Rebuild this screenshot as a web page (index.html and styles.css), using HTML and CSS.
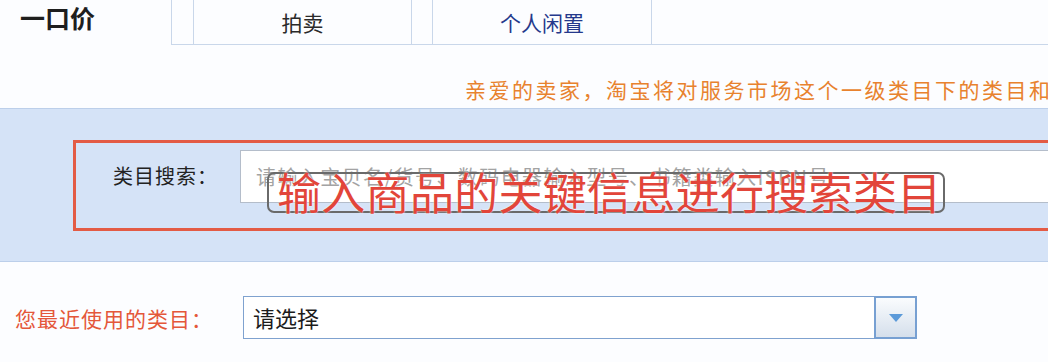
FILE: index.html
```
<!DOCTYPE html>
<html lang="zh-CN">
<head>
  <meta charset="UTF-8" />
  <title>发布宝贝 - 选择类目</title>
  <link rel="stylesheet" href="styles.css">
</head>
<body>
  <div class="publish-page">
    <div class="sell-tabs">
      <div class="sell-tab-current">一口价</div>
      <div class="sell-tab-list">
        <a class="sell-tab">拍卖</a>
        <a class="sell-tab sell-tab-blue">个人闲置</a>
      </div>
    </div>

    <p class="notice">亲爱的卖家，淘宝将对服务市场这个一级类目下的类目和发布规则进行调整</p>

    <div class="search-band">
      <div class="search-mark">
        <label class="search-label">类目搜索：</label>
        <div class="search-input">请输入宝贝名/货号、数码电器输入型号、书籍类输入ISBN号</div>
        <div class="search-caption">输入商品的关键信息进行搜索类目</div>
      </div>
    </div>

    <div class="recent">
      <label class="recent-label">您最近使用的类目：</label>
      <div class="recent-select">
        <span class="recent-value">请选择</span>
        <span class="recent-arrow"><i class="arrow-down"></i></span>
      </div>
    </div>
  </div>
</body>
</html>
```

FILE: styles.css
```
:root {
  --line: #c9d7ea;
  --band: #d5e3f7;
  --orange: #e8822e;
  --red: #e35b45;
}

body {
  margin: 0;
  padding: 0;
  font-family: "Noto Sans CJK SC", "Noto Sans", sans-serif;
  background: #fcfdff;
  color: #222;
}

.publish-page {
  width: 1048px;
  height: 362px;
  overflow: hidden;
}

/* tabs */
.sell-tabs {
  display: flex;
  height: 45px;
}

.sell-tab-current {
  width: 151px;
  padding: 1px 0 0 20px;
  font-size: 25px;
  font-weight: 600;
  line-height: 32px;
  color: #1e1e1e;
}

.sell-tab-list {
  flex: 1;
  display: flex;
  border-left: 1px solid var(--line);
  border-bottom: 1px solid var(--line);
}

.sell-tab {
  box-sizing: border-box;
  width: 219px;
  height: 44px;
  margin-left: 21px;
  border-left: 1px solid var(--line);
  border-right: 1px solid var(--line);
  text-align: center;
  line-height: 44px;
  font-size: 21px;
  color: #2a2a2a;
}

.sell-tab + .sell-tab {
  width: 220px;
  margin-left: 20px;
}

.sell-tab-blue {
  color: #25398c;
}

.notice {
  margin: 0;
  height: 63px;
  box-sizing: border-box;
  padding: 32px 0 0 465px;
  font-size: 21px;
  letter-spacing: 2.5px;
  line-height: 24px;
  color: var(--orange);
  white-space: nowrap;
  overflow: hidden;
}

/* search */
.search-band {
  background: var(--band);
  border-top: 1px solid #bccfea;
  border-bottom: 1px solid #bccfea;
  padding: 31px 0 30px 73px;
  overflow: hidden;
}

.search-mark {
  position: relative;
  display: flex;
  align-items: flex-start;
  width: 1100px;
  height: 85px;
  border: 3px solid var(--red);
  padding: 0 0 0 37px;
}

.search-label {
  width: 127px;
  margin-top: 6px;
  line-height: 53px;
  font-size: 20px;
  letter-spacing: 1px;
  color: #222;
}

.search-input {
  flex: 1;
  height: 51px;
  margin-top: 7px;
  padding-left: 15px;
  background: #fff;
  border: 1px solid #b4bdca;
  font-size: 20px;
  letter-spacing: 1.4px;
  line-height: 51px;
  color: #a3a3a3;
  white-space: nowrap;
}

.search-caption {
  position: absolute;
  left: 191px;
  top: 29px;
  box-sizing: border-box;
  width: 678px;
  height: 41px;
  padding-left: 8px;
  border: 2px solid #6a6a6a;
  border-radius: 7px;
  font-size: 44px;
  letter-spacing: 0.3px;
  line-height: 34px;
  color: #e2453a;
  white-space: nowrap;
  text-shadow: 0 0 2px #fff;
}

/* recent categories */
.recent {
  display: flex;
  align-items: center;
  padding: 34px 0 0 15px;
}

.recent-label {
  width: 228px;
  font-size: 21px;
  letter-spacing: 1px;
  color: #e4573a;
}

.recent-select {
  box-sizing: border-box;
  width: 674px;
  height: 43px;
  display: flex;
  border: 1px solid #7fa2cf;
  background: #fff;
}

.recent-value {
  flex: 1;
  padding-left: 9px;
  font-size: 22px;
  line-height: 40px;
  color: #1b1b1b;
}

.recent-arrow {
  width: 39px;
  display: flex;
  align-items: center;
  justify-content: center;
  border: 2px solid #77a0d2;
  margin: -1px -1px -1px 0;
  background: linear-gradient(#fafcfe, #d5dfeb);
}

.arrow-down {
  width: 0;
  height: 0;
  border-left: 7px solid transparent;
  border-right: 7px solid transparent;
  border-top: 8px solid #5b9ad9;
}
```
